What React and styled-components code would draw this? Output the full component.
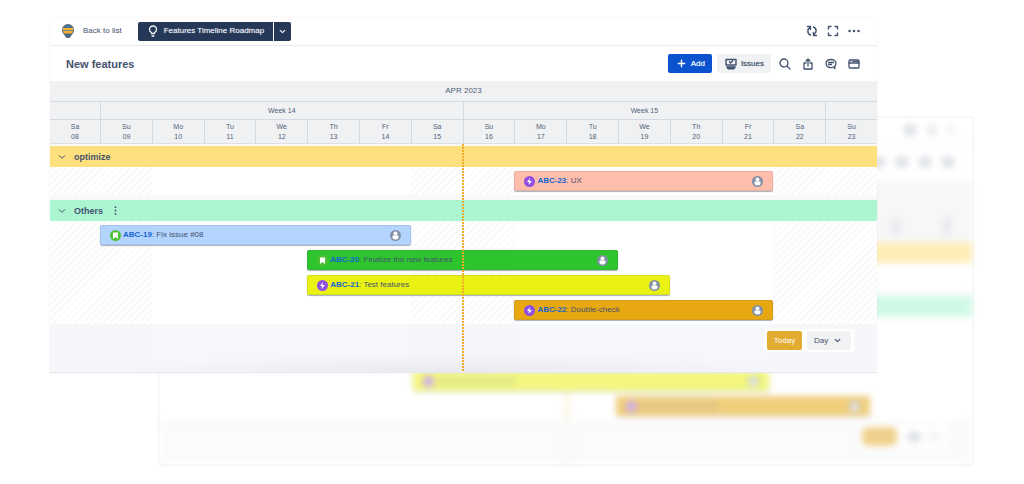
import React from "react";
import styled, { createGlobalStyle } from "styled-components";

const GlobalStyle = createGlobalStyle`
  * {
    box-sizing: border-box;
  }
  body {
    margin: 0;
    background: #fff;
    color: #42526e;
    font-family: "Liberation Sans", Arial, sans-serif;
    font-size: 8px;
    line-height: 10px;
  }
  button, select {
    font: inherit;
    color: inherit;
    border: 0;
    padding: 0;
    cursor: pointer;
  }
`;

const Stage = styled.main`
  display: grid;
  grid-template-columns: minmax(0, 1fr);
  align-items: start;
  padding: 17px 51px 17px 50px;
`;

const Front = styled.div`
  grid-area: 1 / 1;
  z-index: 1;
  margin-right: 96px;
`;

const Behind = styled.div`
  grid-area: 1 / 1;
  margin: 100px 0 0 109px;
  border: 1px solid #f5f7f8;
  box-shadow: 0 0 3px rgba(9, 30, 66, 0.06);
`;

const Faded = styled.div`
  filter: blur(3px);
  opacity: 0.55;
`;

const Card = styled.section`
  background: #fff;
  border-bottom: 1px solid #e6e9ed;
  box-shadow: 0 0 1px rgba(9, 30, 66, 0.12);
`;

const TopBar = styled.header`
  display: flex;
  align-items: center;
  height: ${props => props.$height || "29px"};
  padding: 0 17px 0 12px;
  border-bottom: 1px solid #ebecf0;
`;

const BackLink = styled.a`
  margin: 0 16px 0 9px;
  color: #42526e;
  text-decoration: none;
`;

const SplitButton = styled.div`
  display: flex;
  gap: 1px;
  height: 19px;
`;

const NavyButton = styled.button`
  display: flex;
  align-items: center;
  justify-content: center;
  gap: 5px;
  padding: 0 ${props => (props.$caret ? "5px" : "9px")};
  background: #253858;
  color: #f4f5f7;
  text-shadow: 0 0 1px rgba(255, 255, 255, 0.5);
  border-radius: ${props => (props.$caret ? "0 2px 2px 0" : "2px 0 0 2px")};
`;

const Actions = styled.div`
  display: flex;
  align-items: center;
  gap: ${props => props.$gap || "9px"};
  margin-left: auto;
`;

const IconButton = styled.button`
  display: flex;
  background: none;
`;

const TitleBar = styled.div`
  display: flex;
  align-items: center;
  height: ${props => props.$height || "35px"};
  padding: 0 17px 0 16px;
`;

const Title = styled.h1`
  margin: 0;
  font-size: 11px;
  line-height: 14px;
`;

const Button = styled.button`
  display: flex;
  align-items: center;
  gap: 4px;
  height: 19px;
  padding: 0 7px 0 8px;
  border-radius: 2px;
  background: ${props => (props.$primary ? "#0b53ce" : "#f1f2f4")};
  color: ${props => (props.$primary ? "#fff" : "#42526e")};
  text-shadow: 0 0 1px ${props => (props.$primary ? "rgba(255, 255, 255, 0.5)" : "rgba(66, 82, 110, 0.6)")};
`;

const ButtonPair = styled.div`
  display: flex;
  gap: 5px;
`;

const Scale = styled.div`
  background: #f0f1f3;
  color: #505f79;
  text-align: center;
  border-bottom: 1px solid #dcdfe6;
`;

const Month = styled.div`
  height: 21px;
  line-height: 20px;
  border-bottom: 1px solid #d5d8e1;
`;

const Columns = styled.div`
  display: grid;
  grid-template-columns: 50px repeat(15, minmax(0, 1fr));
`;

const Week = styled.div`
  grid-column: ${props => props.$span};
  height: 18px;
  font-size: 7px;
  line-height: 17px;
  border-bottom: 1px solid #d5d8e1;
  & + & {
    border-left: 1px solid #d5d8e1;
  }
`;

const Day = styled.div`
  height: 23px;
  padding-top: 2px;
  font-size: 7px;
  line-height: 10px;
  & + & {
    border-left: 1px solid #d5d8e1;
  }
`;

const Chart = styled.div`
  display: grid;
  grid-template-columns: minmax(0, 1fr);
`;

const Layer = styled(Columns)`
  grid-area: 1 / 1;
  pointer-events: none;
`;

const Weekend = styled.div`
  grid-column: ${props => props.$span};
  background: repeating-linear-gradient(135deg, #fff 0 3px, #f9f9fa 3px 5px);
`;

const TodayLine = styled.div`
  grid-column: 9;
  justify-self: start;
  width: 2px;
  margin-left: -1px;
  background: repeating-linear-gradient(#f2ac2a 0 2px, transparent 2px 3px);
`;

const FaintTodayLine = styled(TodayLine)`
  width: 8px;
  margin-left: -3px;
  background: #fbf2dc;
`;

const Lanes = styled.div`
  grid-area: 1 / 1;
`;

const Lane = styled.section`
  border-top: ${props => props.$top} solid #f8f9fb;
`;

const LaneHeader = styled.h2`
  display: flex;
  align-items: center;
  height: 21px;
  margin: 0;
  padding-left: 8px;
  background: ${props => props.$color};
  font-size: 9px;
  line-height: 12px;
`;

const LaneName = styled.span`
  margin: 0 8px;
`;

const Rows = styled.div`
  display: grid;
  gap: 5px;
  padding: 4px 0;
`;

const Bar = styled.div`
  grid-column: ${props => props.$span};
  display: flex;
  align-items: center;
  gap: 2px;
  height: 20px;
  padding: 0 10px;
  border-radius: 2px;
  background: ${props => props.$color};
  box-shadow: inset 0 0 0 1px rgba(66, 82, 110, 0.12), 0 1px 1px rgba(9, 30, 66, 0.35);
  white-space: nowrap;
  svg:last-child {
    margin-left: auto;
  }
`;

const IssueKey = styled.a`
  color: #1565d0;
  font-weight: bold;
  text-decoration: none;
`;

const Footer = styled.footer`
  display: flex;
  justify-content: flex-end;
  align-items: flex-start;
  height: ${props => props.$height || "48px"};
  padding: 5px 23px 0 0;
  background: rgba(244, 245, 249, 0.8);
`;

const ShadedFooter = styled(Footer)`
  background:
    radial-gradient(ellipse 42% 40% at 49% 100%, rgba(9, 30, 66, 0.06), transparent),
    rgba(244, 245, 249, 0.8);
`;

const ZoomBox = styled.div`
  display: flex;
  gap: 5px;
  padding: 2px 3px;
  background: #fff;
  border-radius: 3px;
`;

const TodayButton = styled.button`
  height: 19px;
  width: 35px;
  border-radius: 2px;
  background: #e2ac30;
  color: #fff;
`;

const SelectBox = styled.label`
  display: grid;
  grid-template-columns: 44px;
  align-items: center;
  height: 19px;
  border-radius: 2px;
  background: #f1f2f4;
  svg {
    grid-area: 1 / 1;
    justify-self: end;
    margin-right: 10px;
    pointer-events: none;
  }
`;

const Select = styled.select`
  grid-area: 1 / 1;
  height: 19px;
  padding-left: 7px;
  appearance: none;
  background: none;
`;

const Smudge = styled.div`
  width: ${props => props.$width};
  height: ${props => props.$height || "12px"};
  margin: ${props => props.$margin || "0"};
  border-radius: 6px;
  background: ${props => props.$color || "rgba(66, 82, 110, 0.3)"};
`;

const Icon = ({ size = 12, width = 2, children }) => (
  <svg
    width={size}
    height={size}
    viewBox="0 0 24 24"
    fill="none"
    stroke="currentColor"
    strokeWidth={width}
    strokeLinecap="round"
    strokeLinejoin="round"
    aria-hidden="true"
  >
    {children}
  </svg>
);

const Chevron = ({ size = 7, width = 4 }) => (
  <Icon size={size} width={width}>
    <path d="M4 8l8 8 8-8" />
  </Icon>
);

const Logo = () => (
  <svg width="12" height="14" viewBox="0 0 24 28" aria-hidden="true">
    <path d="M0 12a12 12 0 0 1 24 0c0 6-4 9-6 12l-3 4H9l-3-4c-2-3-6-6-6-12z" fill="#5b6675" />
    <path d="M4 6a12 11 0 0 1 16 0z" fill="#3d7fc0" />
    <path d="M2 8h20v4H2z" fill="#f2b632" />
    <path d="M2 12h20v2H2z" fill="#6d8f9c" />
    <path d="M2 14h20l-2 5H4z" fill="#f5ad2b" />
    <path d="M6 21h12l-2 3H8z" fill="#376ea8" />
  </svg>
);

const TypeIcon = ({ type }) => (
  <svg width="11" height="11" viewBox="0 0 22 22" aria-hidden="true">
    <circle cx="11" cy="11" r="11" fill={type === "epic" ? "#904ee2" : "#4fbf35"} />
    {type === "epic" ? (
      <path d="M12 4l-6 8h4l-1 6 7-8h-5z" fill="#fff" />
    ) : (
      <path d="M6 5h10v13l-5-4-5 4z" fill="#fff" />
    )}
  </svg>
);

const Avatar = () => (
  <svg width="11" height="11" viewBox="0 0 22 22" aria-hidden="true">
    <circle cx="11" cy="11" r="11" fill="#8290a5" />
    <circle cx="11" cy="7" r="4" fill="#fff" />
    <path d="M5 12q0-1 1-1h10q1 0 1 1v4q-2 3-6 3t-6-3z" fill="#fff" />
  </svg>
);

const days = ["Sa", "Su", "Mo", "Tu", "We", "Th", "Fr"];

const lanes = [
  {
    name: "optimize",
    color: "#ffe07f",
    top: "2px",
    issues: [{ id: "ABC-23", text: "UX", type: "epic", color: "#ffbdab", span: "10 / 15" }]
  },
  {
    name: "Others",
    color: "#abf5d1",
    top: "5px",
    menu: true,
    issues: [
      { id: "ABC-19", text: "Fix issue #08", type: "story", color: "#b3d4ff", span: "2 / 8" },
      { id: "ABC-20", text: "Finalize the new features", type: "story", color: "#2ec42e", span: "6 / 12" },
      { id: "ABC-21", text: "Test features", type: "epic", color: "#eaf214", span: "6 / 13" },
      { id: "ABC-22", text: "Double-check", type: "epic", color: "#e8a811", span: "10 / 15" }
    ]
  }
];

const Roadmap = () => (
  <Card>
    <TopBar>
      <Logo />
      <BackLink href="#list">Back to list</BackLink>
      <SplitButton>
        <NavyButton>
          <Icon size={12} width={2.6}>
            <path d="M9 17v-2c-2-1-4-3-4-6a7 7 0 0 1 14 0c0 3-2 5-4 6v2zM10 22h4" />
          </Icon>
          Features Timeline Roadmap
        </NavyButton>
        <NavyButton $caret aria-label="Switch view">
          <Chevron />
        </NavyButton>
      </SplitButton>
      <Actions>
        <IconButton aria-label="Refresh">
          <Icon width={2.8}>
            <path d="M9 20C2 17 2 8 9 4M3 3h6v6M15 4c7 3 7 12 0 16M21 21h-6v-6" />
          </Icon>
        </IconButton>
        <IconButton aria-label="Full screen">
          <Icon width={2.8}>
            <path d="M3 8V3h5M16 3h5v5M21 16v5h-5M8 21H3v-5" />
          </Icon>
        </IconButton>
        <IconButton aria-label="More">
          <Icon width={5}>
            <path d="M3 12h.1M12 12h.1M21 12h.1" />
          </Icon>
        </IconButton>
      </Actions>
    </TopBar>
    <TitleBar>
      <Title>New features</Title>
      <Actions $gap="8px">
        <ButtonPair>
          <Button $primary>
            <Icon size={11} width={3}>
              <path d="M12 5v14M5 12h14" />
            </Icon>
            Add
          </Button>
          <Button>
            <Icon width={2.8}>
              <path d="M2 3h20v11H2zM9 8l2 2 4-4" />
              <path d="M4 18h16M6 21h12" strokeWidth="3.5" />
            </Icon>
            Issues
          </Button>
        </ButtonPair>
        <Actions $gap="11px">
          <IconButton aria-label="Search">
            <Icon width={2.6}>
              <circle cx="10" cy="10" r="8" />
              <path d="M16 16l6 6" />
            </Icon>
          </IconButton>
          <IconButton aria-label="Share">
            <Icon width={2.6}>
              <path d="M8 10H4v12h16V10h-4M12 16V2M8 6l4-4 4 4" />
            </Icon>
          </IconButton>
          <IconButton aria-label="Feedback">
            <Icon width={2.6}>
              <path d="M20 21l-3-3c-8 3-15 0-15-7s5-8 10-8 10 3 10 8c0 3-1 4-3 6zM7 9h10M7 13h6" />
            </Icon>
          </IconButton>
          <IconButton aria-label="Window">
            <Icon width={2.6}>
              <rect x="2" y="4" width="20" height="16" rx="2" />
              <path d="M2 10h20" />
              <path d="M6 7h.1M10 7h11" strokeWidth="2" />
            </Icon>
          </IconButton>
        </Actions>
      </Actions>
    </TitleBar>
    <Scale>
      <Month>APR 2023</Month>
      <Columns>
        <Week $span="1" />
        <Week $span="2 / 9">Week 14</Week>
        <Week $span="9 / 16">Week 15</Week>
        <Week $span="16" />
      </Columns>
      <Columns>
        {Array.from({ length: 16 }, (_, i) => (
          <Day key={i}>
            {days[i % 7]}
            <br />
            {String(i + 8).padStart(2, "0")}
          </Day>
        ))}
      </Columns>
    </Scale>
    <Chart>
      <Layer>
        <Weekend $span="1 / 3" />
        <Weekend $span="8 / 10" />
        <Weekend $span="15 / 17" />
      </Layer>
      <Lanes>
        {lanes.map(lane => (
          <Lane key={lane.name} $top={lane.top}>
            <LaneHeader $color={lane.color}>
              <IconButton aria-label={`Collapse ${lane.name}`}>
                <Chevron size={8} width={3} />
              </IconButton>
              <LaneName>{lane.name}</LaneName>
              {lane.menu && (
                <IconButton aria-label="Lane menu">
                  <Icon size={9} width={5}>
                    <path d="M12 3v.1M12 12v.1M12 21v.1" />
                  </Icon>
                </IconButton>
              )}
            </LaneHeader>
            <Rows>
              {lane.issues.map(issue => (
                <Columns key={issue.id}>
                  <Bar $color={issue.color} $span={issue.span}>
                    <TypeIcon type={issue.type} />
                    <span>
                      <IssueKey href={`#${issue.id}`}>{issue.id}</IssueKey>: {issue.text}
                    </span>
                    <Avatar />
                  </Bar>
                </Columns>
              ))}
            </Rows>
          </Lane>
        ))}
        <ShadedFooter>
          <ZoomBox>
            <TodayButton>Today</TodayButton>
            <SelectBox>
              <Select aria-label="Time scale" defaultValue="Day">
                <option>Day</option>
              </Select>
              <Chevron />
            </SelectBox>
          </ZoomBox>
        </ShadedFooter>
      </Lanes>
      <Layer>
        <TodayLine />
      </Layer>
    </Chart>
  </Card>
);

// out-of-focus copy of the board that sits behind the real one
const BlurredRoadmap = () => (
  <Faded>
    <TopBar $height="25px">
      <Actions>
        <Smudge $width="14px" />
        <Smudge $width="12px" $color="rgba(66, 82, 110, 0.18)" />
        <Smudge $width="8px" $color="rgba(66, 82, 110, 0.12)" />
      </Actions>
    </TopBar>
    <TitleBar $height="38px">
      <Actions $gap="9px">
        <Smudge $width="14px" />
        <Smudge $width="14px" />
        <Smudge $width="14px" />
        <Smudge $width="14px" />
      </Actions>
    </TitleBar>
    <Scale>
      <Columns>
        {Array.from({ length: 16 }, (_, i) => (
          <Smudge key={i} $width="10px" $height="18px" $margin="36px auto 4px" $color="rgba(66, 82, 110, 0.14)" />
        ))}
      </Columns>
    </Scale>
    <Chart>
      <Layer>
        <FaintTodayLine />
      </Layer>
      <Lanes>
        {lanes.map(lane => (
          <Lane key={lane.name} $top={lane.top}>
            <LaneHeader $color={lane.color} as="div" />
            <Rows>
              {lane.issues.map(issue => (
                <Columns key={issue.id}>
                  <Bar $color={issue.color} $span={issue.span}>
                    <TypeIcon type={issue.type} />
                    <Smudge $width="80px" $height="10px" $color="rgba(66, 82, 110, 0.16)" />
                    <Avatar />
                  </Bar>
                </Columns>
              ))}
            </Rows>
          </Lane>
        ))}
        <Footer $height="44px">
          <ZoomBox>
            <Smudge $width="35px" $height="19px" $color="#e2ac30" />
            <Smudge $width="14px" $margin="4px 0 0 5px" />
            <Smudge $width="17px" $margin="4px 3px 0 0" $color="rgba(66, 82, 110, 0.08)" />
          </ZoomBox>
        </Footer>
      </Lanes>
    </Chart>
  </Faded>
);

export default function App() {
  return (
    <>
      <GlobalStyle />
      <Stage>
        <Behind aria-hidden="true">
          <BlurredRoadmap />
        </Behind>
        <Front>
          <Roadmap />
        </Front>
      </Stage>
    </>
  );
}
